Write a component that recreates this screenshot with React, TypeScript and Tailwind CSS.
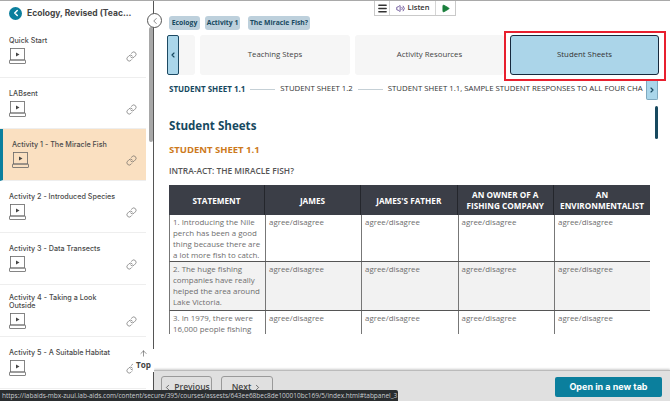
import { ChevronLeft, ChevronRight, Link, ArrowUp, Menu, Volume2, Play } from "lucide-react";

const lessons = [
  { title: "Quick Start", h: "h-[53px]", pt: "pt-[12px]" },
  { title: "LABsent", h: "h-[51px]", pt: "pt-[12px]" },
  { title: "Activity 1 - The Miracle Fish", h: "h-[52px]", pt: "pt-[12px]", active: true },
  { title: "Activity 2 - Introduced Species", h: "h-[52px]", pt: "pt-[12px]" },
  { title: "Activity 3 - Data Transects", h: "h-[52px]", pt: "pt-[12px]" },
  { title: "Activity 4 - Taking a Look Outside", h: "h-[52px]", pt: "pt-[9px]" },
  { title: "Activity 5 - A Suitable Habitat", h: "h-[52px]", pt: "pt-[12px]" },
];

const rows = [
  ["1. Introducing the Nile perch has been a good thing because there are a lot more fish to catch.", "h-[46px]", "bg-white"],
  ["2. The huge fishing companies have really helped the area around Lake Victoria.", "h-[49px]", "bg-[#f2f2f2]"],
  ["3. In 1979, there were 16,000 people fishing", "h-[24px]", "bg-white"],
];

function LaptopIcon() {
  return (
    <svg width="17" height="16" viewBox="0 0 17 16" fill="none" stroke="#666" strokeWidth="0.8">
      <rect x="1.5" y="0.5" width="14" height="11.5" />
      <rect x="0.5" y="12" width="16" height="3.5" rx="0.5" />
      <path d="M7 4.5l3.5 2-3.5 2z" fill="#444" stroke="none" />
    </svg>
  );
}

function LessonItem({ title, h, pt, active }: { title: string; h: string; pt: string; active?: boolean }) {
  return (
    <div className={`${h} ${pt} shrink-0 border-b border-[#eeeeee] ${active ? "bg-[#fae0c1] border-l-[3px] border-l-[#0b7f9d] pl-[9px]" : "pl-[9px]"}`}>
      <div className="text-[7.2px] leading-[8px] font-medium text-[#4a4a4a] pr-[26px] font-['Inter',sans-serif]">{title}</div>
      <div className="mt-[3px] flex items-center justify-between pr-[9px]">
        <LaptopIcon />
        <Link size={11} strokeWidth={1.3} className="text-[#555]" />
      </div>
    </div>
  );
}

function Crumb({ children, w }: { children: string; w: string }) {
  return <span className={`${w} h-[14px] text-center rounded-[3px] bg-[#bdd0dc] text-[6.8px] leading-[14px] font-bold text-[#17495f] whitespace-nowrap`}>{children}</span>;
}

function Tab({ label, w }: { label: string; w: string }) {
  return <div className={`${w} h-[40px] rounded-[3px] bg-[#f6f6f6] flex items-center justify-center text-[7.8px] text-[#444]`}>{label}</div>;
}

export default function App() {
  return (
    <div className="relative w-[670px] h-[401px] overflow-hidden bg-white border-t border-[#a9a9a9] flex font-['Open_Sans',sans-serif]">
      {/* sidebar */}
      <aside className="w-[154px] shrink-0 border-r border-[#555] flex flex-col">
        <div className="h-[24px] shrink-0 flex items-center pl-[9px] gap-[5px]">
          <span className="w-[13px] h-[13px] rounded-full bg-[#0b7f9d] flex items-center justify-center">
            <ChevronLeft size={10} strokeWidth={3.5} className="text-white" />
          </span>
          <span className="text-[8.5px] font-bold text-[#444] font-['Inter',sans-serif] whitespace-nowrap">Ecology, Revised (Teac...</span>
        </div>
        <div className="flex-1 min-h-0 flex">
          <div className="w-[146px] flex flex-col overflow-hidden">
            {lessons.map((l) => <LessonItem key={l.title} {...l} />)}
          </div>
          <div className="w-[7px] flex justify-center pl-[2px]">
            <div className="w-[4px] h-[115px] mt-[2px] bg-[#a8a8a8] rounded-[2px]" />
          </div>
        </div>
      </aside>

      {/* main */}
      <div className="flex-1 min-w-0 flex flex-col">
        <div className="flex-1 min-h-0 relative">
          <div className="absolute left-[220px] -top-px h-[16px] flex border border-[#c9c9c9] bg-white text-[#333]">
            <div className="w-[15px] flex items-center justify-center border-r border-[#d5d5d5]"><Menu size={11} strokeWidth={3} /></div>
            <div className="w-[46px] flex items-center justify-center gap-[3px] border-r border-[#d5d5d5] text-[7.5px] font-semibold">
              <Volume2 size={9} className="text-[#4a2d80]" />Listen
            </div>
            <div className="w-[19px] flex items-center justify-center"><Play size={9} className="text-[#1a7f3c] fill-[#1a7f3c]" /></div>
          </div>

          <div className="flex pl-[15px] pt-[15px]">
            <Crumb w="w-[31px] mr-[5px]">Ecology</Crumb>
            <Crumb w="w-[35px] mr-[8px]">Activity 1</Crumb>
            <Crumb w="w-[62px]">The Miracle Fish?</Crumb>
          </div>

          <div className="flex mt-[5px] pl-[13px] h-[40px]">
            <div className="w-[12px] h-[40px] rounded-[2px] bg-[#aad6ea] border border-[#1d4a63] flex items-center justify-center">
              <ChevronLeft size={8} strokeWidth={3.5} className="text-[#17495f]" />
            </div>
            <div className="w-[16px] h-[40px] bg-[#f6f6f6] rounded-r-[3px] mr-[5px]" />
            <Tab label="Teaching Steps" w="w-[150px] mr-[5px]" />
            <Tab label="Activity Resources" w="w-[149px] mr-[6px]" />
            <div className="w-[149px] h-[40px] rounded-[3px] bg-[#abd5e9] border-[1.5px] border-[#17293d] flex items-center justify-center text-[7.8px] text-[#333]">Student Sheets</div>
          </div>
          <div className="absolute left-[350px] top-[30px] w-[162px] h-[50px] border-[2px] border-[#e8202f]" />

          <div className="relative mt-[8px] pl-[15px] pr-[12px] h-[12px] flex items-center text-[7.8px] text-[#333] whitespace-nowrap overflow-hidden">
            <span className="text-[8px] font-bold text-[#17495f]">STUDENT SHEET 1.1</span>
            <span className="w-[25px] h-px bg-[#c5d0d6] mx-[5px]" />
            <span>STUDENT SHEET 1.2</span>
            <span className="w-[25px] h-px bg-[#c5d0d6] mx-[5px]" />
            <span>STUDENT SHEET 1.1, SAMPLE STUDENT RESPONSES TO ALL FOUR CHA</span>
          </div>
          <div className="absolute left-[492px] top-[80px] w-[12px] h-[19px] rounded-b-[2px] bg-[#aad6ea] border-x border-b border-[#7ea9bf] flex items-center justify-center">
            <ChevronRight size={8} strokeWidth={3.5} className="text-[#17495f]" />
          </div>
          <div className="absolute left-[501px] top-[105px] w-[3px] h-[33px] bg-[#17495f] rounded-[2px]" />

          <div className="pl-[15px] pt-[22px]">
            <h1 className="text-[11.6px] leading-[18px] font-bold text-[#17495f]">Student Sheets</h1>
            <div className="mt-[8px] text-[9.5px] leading-[14px] font-bold text-[#cd7a1c]">STUDENT SHEET 1.1</div>
            <div className="mt-[7px] text-[8.4px] leading-[13px] font-semibold text-[#555]">INTRA-ACT: THE MIRACLE FISH?</div>

            <div className="mt-[8px] w-[481px] overflow-hidden">
              <div className="grid grid-cols-[96px_96px_96.5px_96.5px_96px] h-[30px] bg-[#3b3e47] text-white text-[8.2px] leading-[11px] font-bold text-center">
                {["STATEMENT", "JAMES", "JAMES'S FATHER", "AN OWNER OF A FISHING COMPANY", "AN ENVIRONMENTALIST"].map((c) => (
                  <div key={c} className="flex items-center justify-center px-[5px] border-r border-[#24262c] last:border-r-0">{c}</div>
                ))}
              </div>
              {rows.map(([text, h, bg], i) => (
                <div key={i} className={`grid grid-cols-[96px_96px_96.5px_96.5px_96px] ${h} ${bg} text-[7.9px] leading-[11px] text-[#6e6e6e] border-l border-[#777] overflow-hidden ${i ? "border-t border-t-[#555]" : ""}`}>
                  <div className="border-r border-[#777] pl-[3px] pr-[2px] pt-[2px]">{text}</div>
                  {[0, 1, 2, 3].map((n) => (
                    <div key={n} className="border-r border-[#777] pl-[3px] pt-[2px]">agree/disagree</div>
                  ))}
                </div>
              ))}
            </div>
          </div>
        </div>

        <footer className="h-[31px] shrink-0 bg-[#e0e0e0] border-t border-[#bbbbbb] shadow-[0_-1px_2px_rgba(0,0,0,0.2)] flex items-start pt-[5px] pl-[7px] pr-[8px] text-[8.5px] font-semibold text-[#444]">
          <div className="w-[51px] h-[24px] border border-[#9a9a9a] rounded-[3px] flex items-start pt-[4px] justify-center gap-[2px]">
            <ChevronLeft size={9} strokeWidth={2} className="mt-[2px]" />Previous
          </div>
          <div className="ml-[9px] w-[52px] h-[24px] border border-[#9a9a9a] rounded-[3px] flex items-start pt-[4px] justify-center gap-[2px]">
            Next<ChevronRight size={9} strokeWidth={2} className="mt-[2px]" />
          </div>
          <div className="ml-auto mt-[1px] w-[107px] h-[20px] rounded-[2px] bg-[#0b7f9d] text-white text-[9px] font-bold flex items-center justify-center font-['Inter',sans-serif]">Open in a new tab</div>
        </footer>
      </div>

      {/* collapse toggle */}
      <div className="absolute left-[147px] top-[12px] w-[15px] h-[15px] rounded-full bg-white border border-[#555] flex items-center justify-center">
        <ChevronLeft size={10} strokeWidth={1.5} className="text-[#444]" />
      </div>

      {/* back to top */}
      <div className="absolute left-[133px] top-[348px] w-[21px] h-[23px] bg-white flex flex-col items-center text-[#444]">
        <ArrowUp size={9} strokeWidth={1.5} />
        <span className="text-[8.2px] leading-[10px] mt-[2px] font-bold">Top</span>
      </div>

      {/* browser status bubble */}
      <div className="absolute left-0 top-[389px] h-[11px] w-[398px] bg-[#2a2d2f] rounded-tr-[2px] pl-[2px] text-[6.5px] leading-[11px] text-[#c9cccf] whitespace-nowrap overflow-hidden">
        https://labaids-mbx-zuul.lab-aids.com/content/secure/395/courses/assests/643ee68bec8de100010bc169/5/index.html#tabpanel_3
      </div>
    </div>
  );
}
